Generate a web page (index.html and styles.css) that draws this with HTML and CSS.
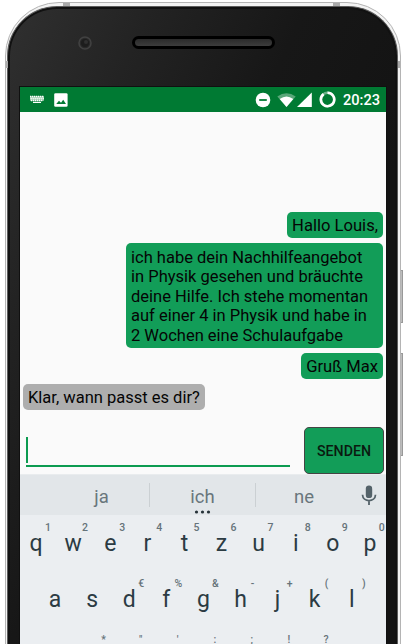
FILE: index.html
```html
<!DOCTYPE html>
<html lang="de">
<head>
<meta charset="utf-8">
<title>Chat</title>
<link rel="stylesheet" href="styles.css">
</head>
<body>
<div class="stage">
<i class="side power"></i><i class="side volume"></i>
<div class="frame">
<i class="band top left"></i><i class="band top right"></i><i class="band edge west"></i><i class="band edge east"></i>
<div class="phone">
  <div class="bezel">
    <svg class="camera" width="14" height="14" viewBox="0 0 14 14"><circle cx="7" cy="7" r="6" fill="#292929" stroke="#414141" stroke-width="1.6"/><circle cx="7" cy="7" r="4" fill="#1d1d1d"/><circle cx="8" cy="6" r="2" fill="#303030"/></svg>
    <div class="speaker"></div>
  </div>
  <div class="screen">
    <header class="status">
      <svg class="kbd" width="16" height="9" viewBox="0 0 16 9"><path d="M1 1.2H15V5.8H1Z" fill="#8fc3a2"/><path d="M1 1.5H15M1.5 3.5H15M2 5.5H14" stroke="#fff" stroke-width="1.4" stroke-dasharray="1.3 .7"/><path d="M4 7.4H12" stroke="#fff" stroke-width="1.2"/></svg>
      <svg class="photo" width="14" height="14" viewBox="0 0 14 14"><rect x=".2" y=".3" width="13.4" height="13.4" rx="1.3" fill="#fff"/><path d="M2.2 11 5 7.7 7 9.8 9.2 6.8 12 11Z" fill="#007a33"/></svg>
      <span class="grow"></span>
      <svg class="dnd" width="16" height="16" viewBox="0 0 16 16"><circle cx="8" cy="8" r="7.3" fill="#fff"/><path d="M4.2 8H11.8" stroke="#007a33" stroke-width="1.8"/></svg>
      <svg class="wifi" width="19" height="16" viewBox="0 0 19 16"><path d="M.3 4.5Q9.5-2.2 18.7 4.5L9.5 15Z" fill="#59a779"/><path d="M2.7 7.1Q9.5 1.7 16.3 7.1L9.5 15Z" fill="#fff"/></svg>
      <svg class="signal" width="15" height="16" viewBox="0 0 15 16"><path d="M0 15 14.8 .6V15Z" fill="#fff"/></svg>
      <svg class="battery" width="17" height="17" viewBox="0 0 17 17"><circle cx="8.5" cy="8.5" r="6.7" fill="none" stroke="#69af86" stroke-width="2.5"/><path d="M8.5 1.8A6.7 6.7 0 1 1 4.6 3.1" fill="none" stroke="#fff" stroke-width="2.6"/></svg>
      <time>20:23</time>
    </header>
    <main class="chat">
      <p class="msg">Hallo Louis,</p>
      <p class="msg long">ich habe dein Nachhilfeangebot<br>in Physik gesehen und bräuchte<br>deine Hilfe. Ich stehe momentan<br>auf einer 4 in Physik und habe in<br>2 Wochen eine Schulaufgabe</p>
      <p class="msg">Gruß Max</p>
      <p class="msg received">Klar, wann passt es dir?</p>
    </main>
    <div class="compose">
      <div class="input"><i class="caret"></i></div>
      <button class="send">SENDEN</button>
    </div>
    <div class="suggestions">
      <span>ja</span><span class="middle">ich<svg class="dots" width="17" height="4" viewBox="0 0 17 4"><g fill="#263238"><circle cx="2.5" cy="2" r="1.6"/><circle cx="8.5" cy="2" r="1.6"/><circle cx="14.5" cy="2" r="1.6"/></g></svg></span><span>ne</span>
      <svg class="mic" width="16" height="22" viewBox="0 0 16 22"><rect x="4.8" y=".6" width="6.4" height="12.5" rx="3.2" fill="#546269"/><path d="M1.5 9.8C1.8 17.5 14.2 17.5 14.5 9.8M8 15.6V20" fill="none" stroke="#546269" stroke-width="1.8"/></svg>
    </div>
    <div class="keys">
      <div class="row first"><b>q<small>1</small></b><b>w<small>2</small></b><b>e<small>3</small></b><b>r<small>4</small></b><b>t<small>5</small></b><b>z<small>6</small></b><b>u<small>7</small></b><b>i<small>8</small></b><b>o<small>9</small></b><b>p<small>0</small></b></div>
      <div class="row second"><b>a</b><b>s</b><b>d<small>€</small></b><b>f<small>%</small></b><b>g<small>&amp;</small></b><b>h<small>-</small></b><b>j<small>+</small></b><b>k<small>(</small></b><b>l<small>)</small></b></div>
      <div class="row third"><b><small>*</small></b><b><small>"</small></b><b><small>'</small></b><b><small>:</small></b><b><small>;</small></b><b><small>!</small></b><b><small>?</small></b></div>
    </div>
  </div>
</div>
</div>
</div>
</body>
</html>
```
FILE: styles.css
```css
* { box-sizing: border-box; }
body { margin: 0; background: #fff; font-family: Roboto, sans-serif; overflow: hidden; }
.stage { position: relative; width: 406px; height: 644px; padding: 2px 5px 0; overflow: hidden; }
.frame {
  position: relative; width: 396px; height: 660px; padding: 3px 2px 0 1px;
  border: 1px solid #b4b4b4; border-radius: 54px 54px 0 0; background: #f3f3f3;
}
.band { position: absolute; background: #aaa; }
.top { top: 0; width: 7px; height: 3px; }
.left { left: 57px; }
.right { right: 60px; }
.edge { top: 58px; width: 2px; height: 7px; }
.west { left: 0; }
.east { right: 0; }
.side { position: absolute; left: 399px; width: 4px; background: #bcbcbc; border: 1px solid #999; }
.power { top: 270px; height: 53px; }
.volume { top: 353px; height: 103px; }
.phone {
  height: 660px; padding: 0 11px 0 12px; border: 1px solid #5c5c5c; border-bottom: 0;
  border-radius: 50px 50px 0 0; box-shadow: inset 0 0 0 2px #111;
  background: linear-gradient(115deg, #303030 0, #232323 130px, #171717 270px, #131313 420px);
}
.bezel { display: flex; height: 80px; padding: 29px 0 0 58px; }
.camera { flex: none; }
.speaker {
  width: 143px; height: 13px; margin-left: 40px; border: 3px solid #000;
  border-radius: 7px; background: linear-gradient(#2b2b2b, #3c3c3c);
}
.screen { width: 366px; height: 557px; background: #fafafa; outline: 1px solid #101010; }
.status { display: flex; align-items: center; height: 25px; padding: 0 6px 0 9px; background: #007a33; color: #fff; }
.status svg { flex: none; }
.photo { margin-left: 9px; }
.grow { flex: 1; }
.wifi { margin-left: 6px; }
.signal { margin-left: 1px; }
.battery { margin-left: 7px; }
.status time { margin-left: 7px; font-size: 14.6px; font-weight: 500; line-height: 26px; }
.chat { display: flex; flex-direction: column; align-items: flex-end; gap: 5px; height: 315px; padding: 100px 3px 0; }
.msg {
  flex: none; margin: 0; padding: 4.2px 5px 2.8px; border-radius: 5px; background: #129d58;
  color: #050505; font-size: 16.6px; line-height: 19.5px; white-space: nowrap;
}
.long { width: 257px; font-size: 16.5px; }
.received { align-self: flex-start; margin-top: -.5px; background: #aeaeae; font-size: 16.5px; }
.compose { display: flex; justify-content: space-between; height: 47px; padding: 0 2px 0 6px; }
.input { width: 264px; height: 40px; padding-top: 10px; border-bottom: 2px solid #0c9b50; }
.caret { display: block; width: 2px; height: 26px; background: #0c9b50; }
.send {
  width: 80px; height: 47px; padding: 0; border: 1px solid #444; border-radius: 5px;
  background: #129d58; color: #0a1a10; font: 500 14.2px Roboto, sans-serif;
}
.suggestions {
  display: grid; grid-template-columns: 105px 107px 96px; position: relative;
  height: 41px; padding-left: 24px; border-top: 1px solid #e9ecee; background: #e2e6e9; color: #69767c;
}
.suggestions span { font-size: 18.5px; line-height: 44px; text-align: center; padding-left: 10px; }
.suggestions span.middle {
  position: relative; padding: 0;
  background: linear-gradient(#cbd0d3, #cbd0d3) 0 8px / 1px 24px no-repeat, linear-gradient(#cbd0d3, #cbd0d3) 100% 8px / 1px 24px no-repeat;
}
.suggestions span:nth-child(3) { padding: 0; }
.dots { position: absolute; left: 45px; top: 35px; }
.mic { position: absolute; left: 341px; top: 10px; }
.keys { height: 129px; background: #ebeef1; overflow: hidden; }
.row { display: flex; height: 56px; }
.row b { position: relative; flex: none; width: 37.1px; text-align: center; font-size: 23px; line-height: 58px; font-weight: 400; color: #2b3b43; }
.row small { position: absolute; left: 18.5px; top: 5px; width: 24px; font-size: 10.5px; font-weight: 500; line-height: 16px; color: #66737a; }
.first { margin-left: -2.5px; }
.second { padding-left: 16.5px; }
.third { padding-left: 53px; }
```
